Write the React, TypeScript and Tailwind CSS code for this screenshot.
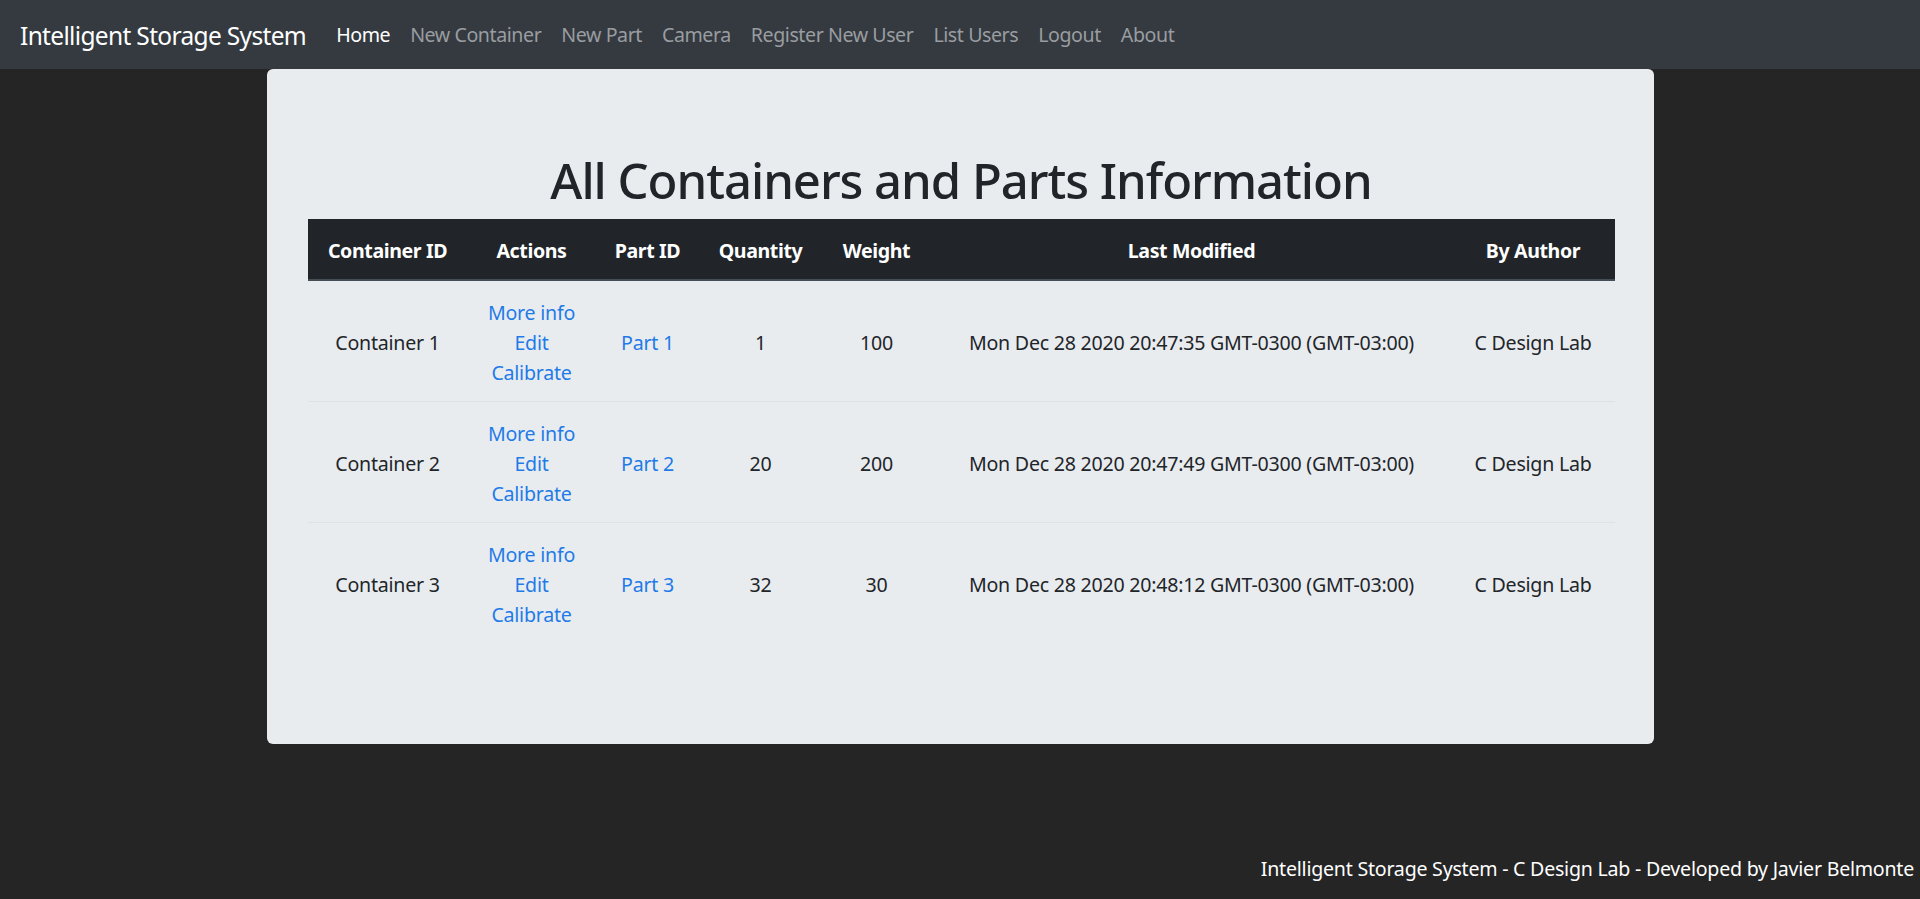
import React from "react";

const rows = [
  { id: "Container 1", part: "Part 1", qty: "1", weight: "100", date: "Mon Dec 28 2020 20:47:35 GMT-0300 (GMT-03:00)" },
  { id: "Container 2", part: "Part 2", qty: "20", weight: "200", date: "Mon Dec 28 2020 20:47:49 GMT-0300 (GMT-03:00)" },
  { id: "Container 3", part: "Part 3", qty: "32", weight: "30", date: "Mon Dec 28 2020 20:48:12 GMT-0300 (GMT-03:00)" },
];

const navLinks = ["New Container", "New Part", "Camera", "Register New User", "List Users", "Logout", "About"];

export default function App() {
  return (
    <div
      className="min-h-screen flex flex-col bg-[#252525] text-[#212529] text-[19.6px] leading-[30px] tracking-[-0.012em]"
      style={{ fontFamily: '"Noto Sans", "Open Sans", sans-serif' }}
    >
      <nav className="h-[69px] bg-[#343a40] flex items-center px-[20px]">
        <span className="text-white text-[24.5px] leading-[37px] mr-[20px] translate-y-[1px] tracking-[-0.027em]">Intelligent Storage System</span>
        <div className="flex items-center tracking-[-0.022em]">
          <span className="px-[10px] text-white">Home</span>
          {navLinks.map((l) => (
            <span key={l} className="px-[10px] text-[#9a9da0]">{l}</span>
          ))}
        </div>
      </nav>

      <div className="flex justify-center">
        <div className="w-[1387px] bg-[#e9ecef] rounded-[6px] pt-[82px] pb-[101px] pl-[41px] pr-[39px]">
          <h1 className="text-center text-[49px] leading-[59px] font-medium mb-[9px] tracking-[-0.021em]">All Containers and Parts Information</h1>
          <table className="w-[1307px] table-fixed border-collapse text-center">
            <colgroup>
              <col className="w-[160px]" />
              <col className="w-[128px]" />
              <col className="w-[104px]" />
              <col className="w-[122px]" />
              <col className="w-[110px]" />
              <col className="w-[520px]" />
              <col className="w-[163px]" />
            </colgroup>
            <thead>
              <tr className="bg-[#212529] text-white tracking-[-0.02em]">
                {["Container ID", "Actions", "Part ID", "Quantity", "Weight", "Last Modified", "By Author"].map((h) => (
                  <th key={h} className="pt-[17px] pb-[14px] px-[4px] font-bold leading-[29px] border-b-2 border-[#454d55] whitespace-nowrap">
                    {h}
                  </th>
                ))}
              </tr>
            </thead>
            <tbody>
              {rows.map((r) => (
                <tr key={r.id} className="border-t border-[#dee2e6]">
                  <td className="pt-[17px] pb-[13px] align-middle">{r.id}</td>
                  <td className="pt-[17px] pb-[13px] align-middle text-[#1f7be8]">
                    <div>More info</div>
                    <div>Edit</div>
                    <div>Calibrate</div>
                  </td>
                  <td className="pt-[17px] pb-[13px] align-middle text-[#1f7be8]">{r.part}</td>
                  <td className="pt-[17px] pb-[13px] align-middle">{r.qty}</td>
                  <td className="pt-[17px] pb-[13px] align-middle">{r.weight}</td>
                  <td className="pt-[17px] pb-[13px] align-middle whitespace-nowrap">{r.date}</td>
                  <td className="pt-[17px] pb-[13px] align-middle whitespace-nowrap">C Design Lab</td>
                </tr>
              ))}
            </tbody>
          </table>
        </div>
      </div>

      <footer className="mt-auto flex justify-end pr-[6px] pb-[16px]">
        <span className="text-white leading-[29px]">Intelligent Storage System - C Design Lab - Developed by Javier Belmonte</span>
      </footer>
    </div>
  );
}
